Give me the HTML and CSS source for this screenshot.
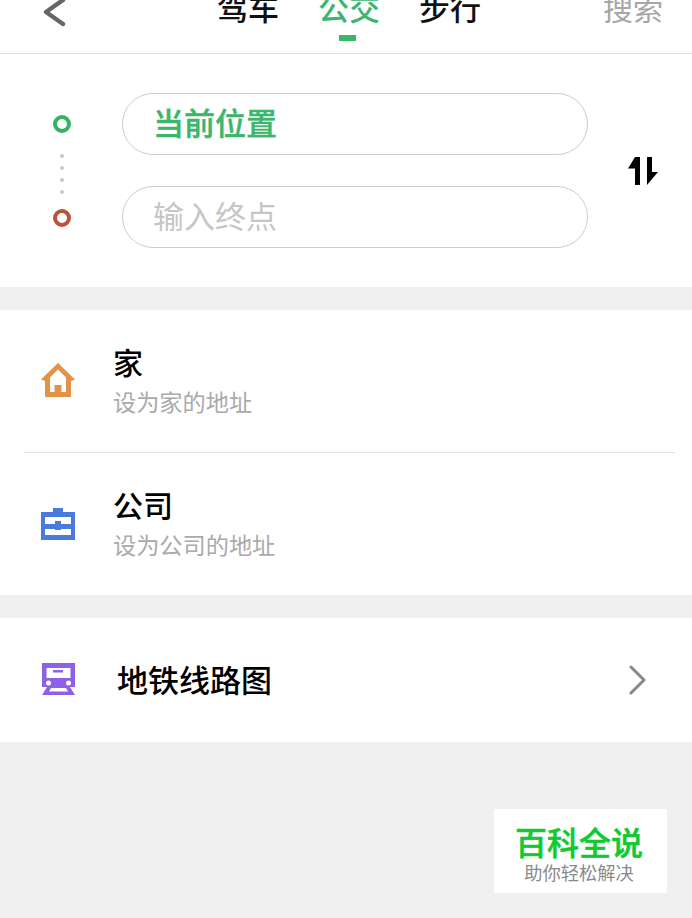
FILE: index.html
```html
<!DOCTYPE html>
<html lang="zh-CN">
<head>
  <meta charset="UTF-8">
  <meta name="viewport" content="width=device-width, initial-scale=1.0">
  <title>路线</title>
  <link rel="stylesheet" href="styles.css">
</head>
<body>

  <header class="header">
    <svg class="back-icon" width="26" height="30" viewBox="0 0 26 30">
      <path d="M22 0 L5 12 L22 24" fill="none" stroke="#666" stroke-width="4.4" stroke-linecap="round" stroke-linejoin="round"/>
    </svg>
    <nav class="tabs">
      <a class="tab">驾车</a>
      <a class="tab active">公交</a>
      <a class="tab">步行</a>
    </nav>
    <a class="search-link">搜索</a>
  </header>

  <section class="route-panel">
    <div class="route-marks">
      <span class="ring ring-start"></span>
      <span class="dots"><i></i><i></i><i></i><i></i></span>
      <span class="ring ring-end"></span>
    </div>
    <div class="route-inputs">
      <div class="pill pill-current">当前位置</div>
      <div class="pill pill-empty">输入终点</div>
    </div>
    <svg class="swap-icon" width="32" height="30" viewBox="0 0 32 30">
      <path d="M8 0 H13 V28 H8 V11.500 H1 Z" fill="#000"/>
      <path d="M20 0 H25 V15 H31 L20 28 Z" fill="#000"/>
    </svg>
  </section>

  <section class="place-list">
    <div class="place">
      <svg class="place-icon" width="36" height="36" viewBox="0 0 36 36">
        <path d="M18 0 L1 16.500 L5 18 V34 H31 V18 L35 16.500 Z" fill="#e29345"/>
        <path d="M18 6.500 L10 14.500 V29 H14.500 V22 H21.500 V29 H26 V14.500 Z" fill="#fff"/>
      </svg>
      <div class="place-text">
        <div class="place-name">家</div>
        <div class="place-hint">设为家的地址</div>
      </div>
    </div>
    <div class="place">
      <svg class="place-icon" width="36" height="34" viewBox="0 0 36 34">
        <path d="M13 1 H23 V5 H35 V33 H1 V5 H13 Z" fill="#4a7bdc"/>
        <rect x="5" y="10" width="26" height="7" fill="#fff"/>
        <rect x="5" y="22" width="26" height="6" fill="#fff"/>
        <rect x="15" y="14" width="6" height="9" fill="#4a7bdc"/>
      </svg>
      <div class="place-text">
        <div class="place-name">公司</div>
        <div class="place-hint">设为公司的地址</div>
      </div>
    </div>
  </section>

  <section class="metro-row">
    <svg class="place-icon" width="36" height="36" viewBox="0 0 36 36">
      <path d="M2 1 H35 V25 L30 25 L35 33 H2 L7 25 L2 25 Z" fill="#8e5fe8"/>
      <rect x="6.500" y="6" width="24" height="10" fill="#fff"/>
      <rect x="13" y="8" width="10" height="2.500" fill="#8e5fe8"/>
      <circle cx="8.500" cy="21" r="2.500" fill="#fff"/>
      <circle cx="28.500" cy="21" r="2.500" fill="#fff"/>
      <path d="M11 26 H26 L28 29.500 H9 Z" fill="#fff"/>
    </svg>
    <div class="metro-name">地铁线路图</div>
    <svg class="chevron" width="18" height="30" viewBox="0 0 18 30">
      <path d="M2 2 L15 15 L2 28" fill="none" stroke="#888" stroke-width="3" stroke-linecap="round" stroke-linejoin="round"/>
    </svg>
  </section>

  <div class="watermark">
    <div class="watermark-title">百科全说</div>
    <div class="watermark-sub">助你轻松解决</div>
  </div>

</body>
</html>
```

FILE: styles.css
```css
* {
  box-sizing: border-box;
}

html, body {
  height: 100%;
}

body {
  margin: 0;
  background-color: #f0f0f0;
  font-family: "Noto Sans CJK SC", "Liberation Sans", sans-serif;
  overflow: hidden;
  position: relative;
}

/* Header */
.header {
  height: 54px;
  background-color: #fff;
  border-bottom: 1px solid #ddd;
  position: relative;
  display: flex;
  align-items: flex-start;
  overflow: hidden;
}

.back-icon {
  margin-left: 41px;
  flex: none;
}

.tabs {
  display: flex;
  gap: 39px;
  margin-left: 150px;
  margin-top: -13px;
}

.tab {
  font-size: 31px;
  line-height: 40px;
  font-weight: 500;
  color: #111;
  position: relative;
}

.tab.active {
  color: #3cb56d;
}

/* little bar under the selected tab */
.tab.active::after {
  content: "";
  position: absolute;
  left: 21px;
  top: 48px;
  width: 17px;
  height: 6px;
  background-color: #3cb56d;
}

.search-link {
  margin-left: auto;
  margin-right: 29px;
  margin-top: -13px;
  font-size: 30px;
  line-height: 40px;
  color: #a6a6a6;
}

/* Start and end inputs */
.route-panel {
  height: 233px;
  background-color: #fff;
  display: flex;
  padding-top: 39px;
}

.route-marks {
  width: 122px;
  padding-left: 2px;
  display: flex;
  flex-direction: column;
  align-items: center;
}

.ring {
  width: 18px;
  height: 18px;
  border-radius: 50%;
  border: 4.5px solid;
  flex: none;
}

.ring-start {
  border-color: #34b364;
  margin-top: 22px;
}

.ring-end {
  border-color: #b9533b;
}

.dots {
  display: flex;
  flex-direction: column;
  align-items: center;
  gap: 8px;
  margin: 21px 0 15px;
}

.dots i {
  width: 4px;
  height: 4px;
  border-radius: 50%;
  background-color: #c8c8c8;
}

.route-inputs {
  width: 466px;
  display: flex;
  flex-direction: column;
  gap: 31px;
}

.pill {
  height: 62px;
  border: 1.5px solid #cdcdcd;
  border-radius: 31px;
  padding-left: 30px;
  font-size: 31px;
  line-height: 56px;
}

.pill-current {
  color: #3cb56d;
  font-weight: 500;
  -webkit-text-stroke: 0.4px #3cb56d;
}

.pill-empty {
  color: #c6c6c6;
}

.swap-icon {
  margin-left: 39px;
  margin-top: 64px;
}

/* Saved places */
.place-list {
  margin-top: 23px;
  background-color: #fff;
  height: 285px;
}

.place {
  height: 143px;
  margin: 0 17px 0 24px;
  display: flex;
  align-items: center;
  border-bottom: 1px solid #e2e2e2;
}

.place:last-child {
  border-bottom: none;
  height: 142px;
}

.place-icon {
  margin-left: 16px;
  flex: none;
}

.place-text {
  margin-left: 37px;
}

.place-name {
  font-size: 30px;
  line-height: 38px;
  font-weight: 500;
  color: #000;
  margin-bottom: 2px;
}

.place-hint {
  font-size: 23.2px;
  line-height: 38px;
  color: #aaa;
}

/* Metro */
.metro-row {
  margin-top: 23px;
  height: 124px;
  background-color: #fff;
  display: flex;
  align-items: center;
  padding-left: 24px;
}

.metro-name {
  margin-left: 41px;
  margin-bottom: 3px;
  font-size: 31px;
  font-weight: 500;
  color: #000;
}

.chevron {
  margin-left: auto;
  margin-right: 45px;
}

/* Watermark sits over the page corner */
.watermark {
  position: absolute;
  left: 494px;
  top: 809px;
  width: 173px;
  height: 84px;
  background-color: #fff;
  text-align: center;
  padding-right: 3px;
}

.watermark-title {
  margin-top: 13px;
  font-size: 32px;
  line-height: 38px;
  font-weight: 500;
  color: #12c92f;
  -webkit-text-stroke: 0.5px #12c92f;
}

.watermark-sub {
  font-size: 18.3px;
  line-height: 24px;
  color: #8a8a8a;
}
```
